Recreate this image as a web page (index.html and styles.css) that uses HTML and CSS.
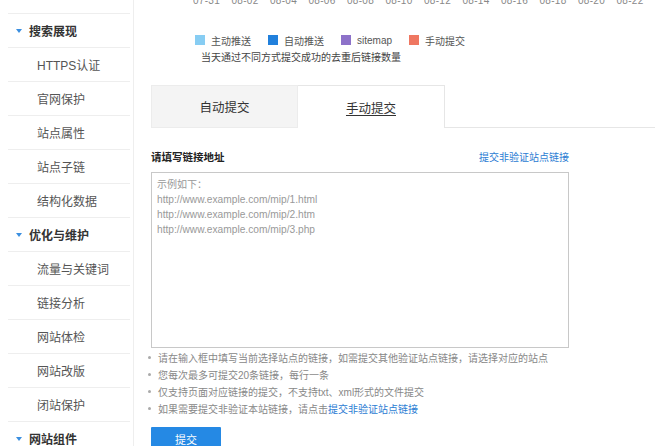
FILE: index.html
```html
<!DOCTYPE html>
<html lang="zh-CN">
<head>
<meta charset="utf-8">
<title>链接提交</title>
<link rel="stylesheet" href="styles.css">
</head>
<body>
<div class="layout">
  <aside class="sidebar">
    <ul class="nav">
      <li class="nav-head"><span class="caret"></span>搜索展现</li>
      <li class="nav-item">HTTPS认证</li>
      <li class="nav-item">官网保护</li>
      <li class="nav-item">站点属性</li>
      <li class="nav-item">站点子链</li>
      <li class="nav-item">结构化数据</li>
      <li class="nav-head"><span class="caret"></span>优化与维护</li>
      <li class="nav-item">流量与关键词</li>
      <li class="nav-item">链接分析</li>
      <li class="nav-item">网站体检</li>
      <li class="nav-item">网站改版</li>
      <li class="nav-item">闭站保护</li>
      <li class="nav-head"><span class="caret"></span>网站组件</li>
    </ul>
  </aside>
  <main class="main">
    <div class="axis">
      <span>07-31</span><span>08-02</span><span>08-04</span><span>08-06</span><span>08-08</span><span>08-10</span><span>08-12</span><span>08-14</span><span>08-16</span><span>08-18</span><span>08-20</span><span>08-22</span>
    </div>
    <div class="legend">
      <span class="lg"><i class="sw sw-1"></i>主动推送</span>
      <span class="lg"><i class="sw sw-2"></i>自动推送</span>
      <span class="lg"><i class="sw sw-3"></i>sitemap</span>
      <span class="lg"><i class="sw sw-4"></i>手动提交</span>
    </div>
    <div class="caption">当天通过不同方式提交成功的去重后链接数量</div>

    <div class="tabs">
      <div class="tab tab-off">自动提交</div>
      <div class="tab tab-on"><span>手动提交</span></div>
      <div class="tab-fill"></div>
    </div>

    <div class="form">
      <div class="form-head">
        <span class="form-title">请填写链接地址</span>
        <a class="link" href="#">提交非验证站点链接</a>
      </div>
      <div class="textarea">
        <div>示例如下：</div>
        <div class="url">http://www.example.com/mip/1.html</div>
        <div class="url">http://www.example.com/mip/2.htm</div>
        <div class="url">http://www.example.com/mip/3.php</div>
      </div>
      <ul class="tips">
        <li>请在输入框中填写当前选择站点的链接，如需提交其他验证站点链接，请选择对应的站点</li>
        <li>您每次最多可提交20条链接，每行一条</li>
        <li>仅支持页面对应链接的提交，不支持txt、xml形式的文件提交</li>
        <li>如果需要提交非验证本站链接，请点击<a class="link" href="#">提交非验证站点链接</a></li>
      </ul>
      <button class="btn" type="button">提交</button>
    </div>
  </main>
</div>
</body>
</html>
```
FILE: styles.css
```css
* { box-sizing: border-box; }
html, body { margin: 0; padding: 0; }
body {
  width: 663px;
  height: 446px;
  overflow: hidden;
  background: #fff;
  font-family: "Liberation Sans", "Noto Sans CJK SC", sans-serif;
  color: #333;
}
.layout { display: flex; height: 446px; }

.sidebar {
  width: 134px;
  flex: none;
  border-right: 1px solid #eeeeee;
  padding: 13px 3px 0 8px;
}
.nav { list-style: none; margin: 0; padding: 0; border-top: 1px solid #eeeeee; }
.nav li {
  height: 34px;
  border-bottom: 1px solid #eeeeee;
  display: flex;
  align-items: center;
  font-size: 12px;
}
.nav-head { font-weight: bold; color: #333; padding-left: 8px; }
.caret {
  width: 0; height: 0;
  border-left: 3px solid transparent;
  border-right: 3px solid transparent;
  border-top: 4px solid #3b8fe0;
  margin-right: 7px;
}
.nav-item { color: #555; padding-left: 29px; }

.main { flex: 1; padding: 0 15px 0 17px; }

.axis {
  height: 10px;
  overflow: hidden;
  display: flex;
  margin-left: 42px;
}
.axis span {
  width: 38.5px;
  flex: none;
  font-size: 10px;
  line-height: 10px;
  margin-top: -4px;
  color: #888;
  letter-spacing: 0.3px;
}

.legend {
  margin: 24px 0 0 44px;
  display: flex;
  gap: 17px;
  height: 12px;
  align-items: center;
}
.lg { display: flex; align-items: center; font-size: 10px; color: #555; }
.sw { width: 10px; height: 10px; margin-right: 6px; display: block; }
.sw-1 { background: #87cdf3; }
.sw-2 { background: #2180dc; }
.sw-3 { background: #8d72c9; }
.sw-4 { background: #ef7761; }

.caption {
  margin: 6px 0 0 50px;
  font-size: 10px;
  line-height: 12px;
  color: #444;
}

.tabs { display: flex; margin-top: 21px; height: 43px; }
.tab {
  width: 147px;
  display: flex;
  align-items: center;
  justify-content: center;
  font-size: 12.5px;
  color: #333;
}
.tab-off {
  background: #f4f4f4;
  border: 1px solid #ececec;
}
.tab-on {
  background: #fff;
  border-top: 1px solid #e6e6e6;
  border-right: 1px solid #e6e6e6;
}
.tab-on span { text-decoration: underline; text-underline-offset: 2px; }
.tab-fill { flex: 1; border-bottom: 1px solid #e6e6e6; }

.form { width: 418px; }
.form-head {
  margin-top: 21px;
  height: 14px;
  display: flex;
  justify-content: space-between;
  align-items: center;
}
.form-title { font-size: 10.5px; font-weight: bold; color: #222; }
.link { font-size: 10px; color: #2b7cd3; text-decoration: none; }

.textarea {
  margin-top: 9px;
  height: 176px;
  border: 1px solid #c8c8c8;
  padding: 4px 5px;
  font-size: 10px;
  line-height: 15px;
  color: #999;
}
.url { font-size: 10.2px; }

.tips {
  list-style: none;
  margin: 1px 0 0 -5px;
  padding: 0;
}
.tips li {
  display: flex;
  align-items: center;
  height: 17px;
  font-size: 10px;
  color: #888;
}
.tips li::before {
  content: "";
  width: 3px;
  height: 3px;
  border-radius: 50%;
  background: #aaa;
  margin: 0 7px 0 2px;
  flex: none;
}

.btn {
  margin-top: 10px;
  width: 70px;
  height: 24px;
  border: 0;
  border-radius: 1px;
  background: #2589e4;
  color: #fff;
  font-family: "Noto Sans CJK SC", sans-serif;
  font-size: 11px;
  padding: 0;
  display: block;
}
```
